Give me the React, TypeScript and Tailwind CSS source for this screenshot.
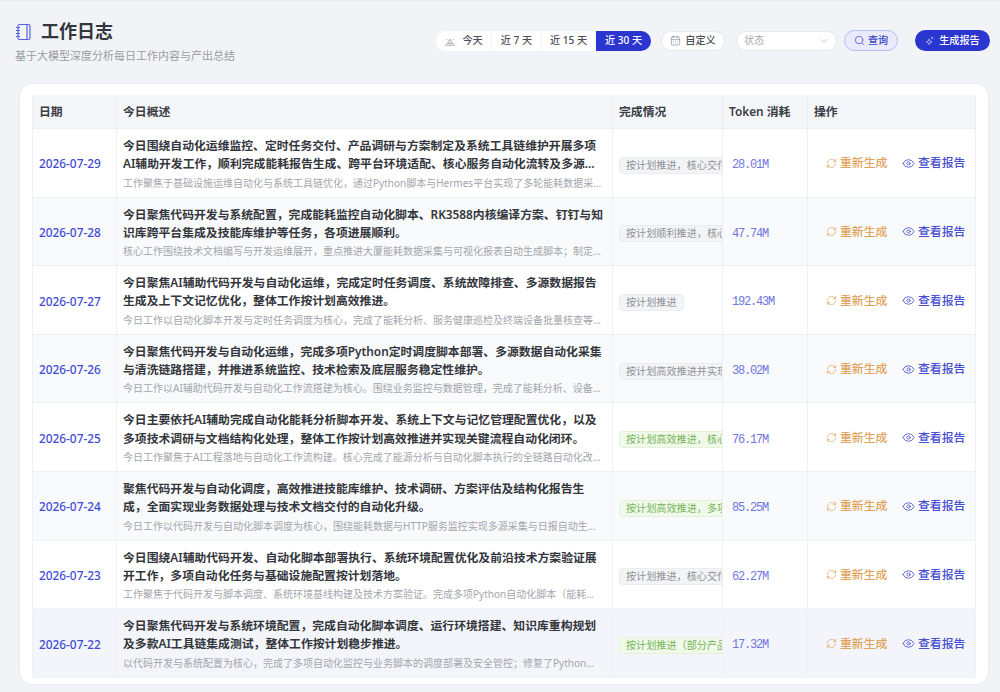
import { CalendarDays, ChevronDown, Eye, Notebook, RefreshCw, Search } from "lucide-react";

type LogRow = {
  date: string;
  title: string;
  summary: string;
  status: string;
  done: boolean;
  tokens: string;
};

const rows: LogRow[] = [
  {
    date: "2026-07-29",
    title: "今日围绕自动化运维监控、定时任务交付、产品调研与方案制定及系统工具链维护开展多项AI辅助开发工作，顺利完成能耗报告生成、跨平台环境适配、核心服务自动化流转及多源数据处理等任务。",
    summary: "工作聚焦于基础设施运维自动化与系统工具链优化，通过Python脚本与Hermes平台实现了多轮能耗数据采集与分析任务",
    status: "按计划推进，核心交付物完成",
    done: false,
    tokens: "28.01M",
  },
  {
    date: "2026-07-28",
    title: "今日聚焦代码开发与系统配置，完成能耗监控自动化脚本、RK3588内核编译方案、钉钉与知识库跨平台集成及技能库维护等任务，各项进展顺利。",
    summary: "核心工作围绕技术文档编写与开发运维展开，重点推进大厦能耗数据采集与可视化报表自动生成脚本；制定了相关方案",
    status: "按计划顺利推进，核心任务完成",
    done: false,
    tokens: "47.74M",
  },
  {
    date: "2026-07-27",
    title: "今日聚焦AI辅助代码开发与自动化运维，完成定时任务调度、系统故障排查、多源数据报告生成及上下文记忆优化，整体工作按计划高效推进。",
    summary: "今日工作以自动化脚本开发与定时任务调度为核心，完成了能耗分析、服务健康巡检及终端设备批量核查等多项任务",
    status: "按计划推进",
    done: false,
    tokens: "192.43M",
  },
  {
    date: "2026-07-26",
    title: "今日聚焦代码开发与自动化运维，完成多项Python定时调度脚本部署、多源数据自动化采集与清洗链路搭建，并推进系统监控、技术检索及底层服务稳定性维护。",
    summary: "今日工作以AI辅助代码开发与自动化工作流搭建为核心。围绕业务监控与数据管理，完成了能耗分析、设备巡检等任务",
    status: "按计划高效推进并实现关键目标",
    done: false,
    tokens: "38.02M",
  },
  {
    date: "2026-07-25",
    title: "今日主要依托AI辅助完成自动化能耗分析脚本开发、系统上下文与记忆管理配置优化，以及多项技术调研与文档结构化处理，整体工作按计划高效推进并实现关键流程自动化闭环。",
    summary: "今日工作聚焦于AI工程落地与自动化工作流构建。核心完成了能源分析与自动化脚本执行的全链路自动化改造与验证",
    status: "按计划高效推进，核心流程闭环",
    done: true,
    tokens: "76.17M",
  },
  {
    date: "2026-07-24",
    title: "聚焦代码开发与自动化调度，高效推进技能库维护、技术调研、方案评估及结构化报告生成，全面实现业务数据处理与技术文档交付的自动化升级。",
    summary: "今日工作以代码开发与自动化脚本调度为核心，围绕能耗数据与HTTP服务监控实现多源采集与日报自动生成及推送功能",
    status: "按计划高效推进，多项任务完成",
    done: true,
    tokens: "85.25M",
  },
  {
    date: "2026-07-23",
    title: "今日围绕AI辅助代码开发、自动化脚本部署执行、系统环境配置优化及前沿技术方案验证展开工作，多项自动化任务与基础设施配置按计划落地。",
    summary: "工作聚焦于代码开发与脚本调度、系统环境基线构建及技术方案验证。完成多项Python自动化脚本（能耗分析与巡检）",
    status: "按计划推进，核心交付物完成",
    done: false,
    tokens: "62.27M",
  },
  {
    date: "2026-07-22",
    title: "今日聚焦代码开发与系统环境配置，完成自动化脚本调度、运行环境搭建、知识库重构规划及多款AI工具链集成测试，整体工作按计划稳步推进。",
    summary: "以代码开发与系统配置为核心，完成了多项自动化监控与业务脚本的调度部署及安全管控；修复了Python运行环境问题",
    status: "按计划推进（部分产品待完善）",
    done: true,
    tokens: "17.32M",
  },
];

const cellBorder = "border-b border-r border-[#eef0f5]";
const headCell = "h-[34px] border-b border-r border-[#eceef4] bg-[#f4f6fa] px-[6px] text-left text-[11.83px] font-semibold text-[#3a3d44]";

function DateRange() {
  return (
    <div className="flex h-5 items-stretch text-[10.14px] font-medium text-[#4b4f57]">
      <button className="flex w-[55px] items-center justify-center gap-[6px] rounded-l-full bg-white">
        <svg width="12" height="12" viewBox="0 0 12 12" fill="none" stroke="#9a9ea6" strokeWidth="0.9">
          <path d="M1 10.2h10M2.6 8.3h6.8M3.8 8.3 6 4.2l2.2 4.1M2.5 4.2l.9.9M9.5 4.2l-.9.9" />
        </svg>
        今天
      </button>
      <button className="ml-px w-[49px] bg-white">近 7 天</button>
      <button className="ml-px w-[53px] bg-white">近 15 天</button>
      <button className="ml-px w-[55px] rounded-r-full bg-[#2b35cf] text-white">近 30 天</button>
    </div>
  );
}

function Header() {
  return (
    <header className="flex h-[83px] items-start justify-between pl-[15px] pr-[10px] pt-[18px]">
      <div>
        <div className="flex items-center gap-[8px]">
          <Notebook size={18} strokeWidth={1.6} className="text-[#5562dc]" />
          <h1 className="text-[18px] leading-[25px] font-semibold text-[#33363c]">工作日志</h1>
        </div>
        <p className="mt-[4px] text-[11px] leading-[15px] text-[#9a9da5]">基于大模型深度分析每日工作内容与产出总结</p>
      </div>
      <div className="mt-[11px] flex items-center">
        <DateRange />
        <button className="ml-[10px] flex h-5 w-[64px] items-center justify-center gap-[4px] rounded-full border border-[#e6e8ee] bg-white text-[10.14px] font-medium text-[#4b4f57]">
          <CalendarDays size={11} strokeWidth={1.3} className="text-[#7d8087]" />
          自定义
        </button>
        <div className="ml-[11px] flex h-5 w-[101px] items-center justify-between rounded-full border border-[#e6e8ee] bg-white pl-[7px] pr-[6px] text-[10.14px] text-[#a9acb3]">
          状态
          <ChevronDown size={12} strokeWidth={1.4} className="text-[#a9acb3]" />
        </div>
        <button className="ml-[7px] flex h-[21px] w-[54px] items-center justify-center gap-[3px] rounded-full border border-[#b9bdf0] bg-[#e9eafb] text-[10.14px] font-medium text-[#3d45c8]">
          <Search size={11} strokeWidth={1.6} />
          查询
        </button>
        <button className="ml-[17px] flex h-[21px] w-[75px] items-center justify-center gap-[4px] rounded-full bg-[#2b35cf] text-[10.14px] font-medium text-white">
          <svg width="10" height="10" viewBox="0 0 12 12" fill="none" stroke="#c9ccf5" strokeWidth="0.9">
            <path d="M5 3.5 6 6l2.5 1L6 8 5 10.5 4 8 1.5 7 4 6ZM8.5 1v2.5M7.2 2.2h2.6M10.5 4.2l.8-.8" />
          </svg>
          生成报告
        </button>
      </div>
    </header>
  );
}

function Row({ row, index }: { row: LogRow; index: number }) {
  const last = index === rows.length - 1;
  const bg = last ? "bg-[#f3f5fb]" : index % 2 === 1 ? "bg-[#f9fafb]" : "bg-white";

  return (
    <tr className={`h-[68.6px] ${bg}`}>
      <td className={`${cellBorder} px-[6px] pt-[3px] text-[11.83px] font-medium text-[#3f4bd6]`}>{row.date}</td>
      <td className={`${cellBorder} pl-[6px] pr-[7px] pt-[1px]`}>
        <div className="line-clamp-2 text-[11.83px] leading-[18.3px] font-semibold text-[#33363c]">{row.title}</div>
        <div className="mr-[2.5px] mt-[3px] truncate text-[10px] leading-[15px] text-[#a3a6ad]">{row.summary}</div>
      </td>
      <td className={`${cellBorder} overflow-hidden pl-[6px]`}>
        <span
          className={`inline-block rounded-[4px] border px-[6px] text-[10.14px] leading-[15px] whitespace-nowrap ${
            row.done ? "border-[#e3f3d8] bg-[#f0f9ea] text-[#76b559]" : "border-[#ebecee] bg-[#f3f4f5] text-[#8f9298]"
          }`}
        >
          {row.status}
        </span>
      </td>
      <td className={`${cellBorder} pl-[9px] pt-[5px] font-['Liberation_Mono',monospace] text-[12px] tracking-[-1.2px] text-[#7076e2]`}>{row.tokens}</td>
      <td className={`${cellBorder} pl-[18px] pt-[1px]`}>
        <div className="flex items-center text-[11.83px] font-medium">
          <span className="flex w-[76px] items-center gap-[3px] text-[#e0a35c]">
            <RefreshCw size={11} strokeWidth={1.5} />
            重新生成
          </span>
          <span className="flex items-center gap-[3px] text-[#474ecf]">
            <Eye size={13} strokeWidth={1.5} />
            查看报告
          </span>
        </div>
      </td>
    </tr>
  );
}

export default function App() {
  return (
    <div className="h-[692px] overflow-hidden border-t border-[#e9ebef] bg-[#f1f3f6] font-['Noto_Sans','Noto_Sans_CJK_SC',sans-serif]">
      <Header />
      <main className="ml-[19px] mr-[11px] -mt-px rounded-[14px] border border-[#e8eaef] bg-white pb-[6px] pl-[12px] pr-[12px] pt-[11px]">
        <table className="w-[944px] table-fixed border-separate border-spacing-0 border-l border-[#eef0f5]">
          <colgroup>
            <col className="w-[84px]" />
            <col className="w-[496px]" />
            <col className="w-[110px]" />
            <col className="w-[85px]" />
            <col className="w-[168px]" />
          </colgroup>
          <thead>
            <tr>
              <th className={headCell}>日期</th>
              <th className={headCell}>今日概述</th>
              <th className={headCell}>完成情况</th>
              <th className={headCell}>Token 消耗</th>
              <th className={headCell}>操作</th>
            </tr>
          </thead>
          <tbody>
            {rows.map((row, index) => (
              <Row key={row.date} row={row} index={index} />
            ))}
          </tbody>
        </table>
      </main>
    </div>
  );
}
